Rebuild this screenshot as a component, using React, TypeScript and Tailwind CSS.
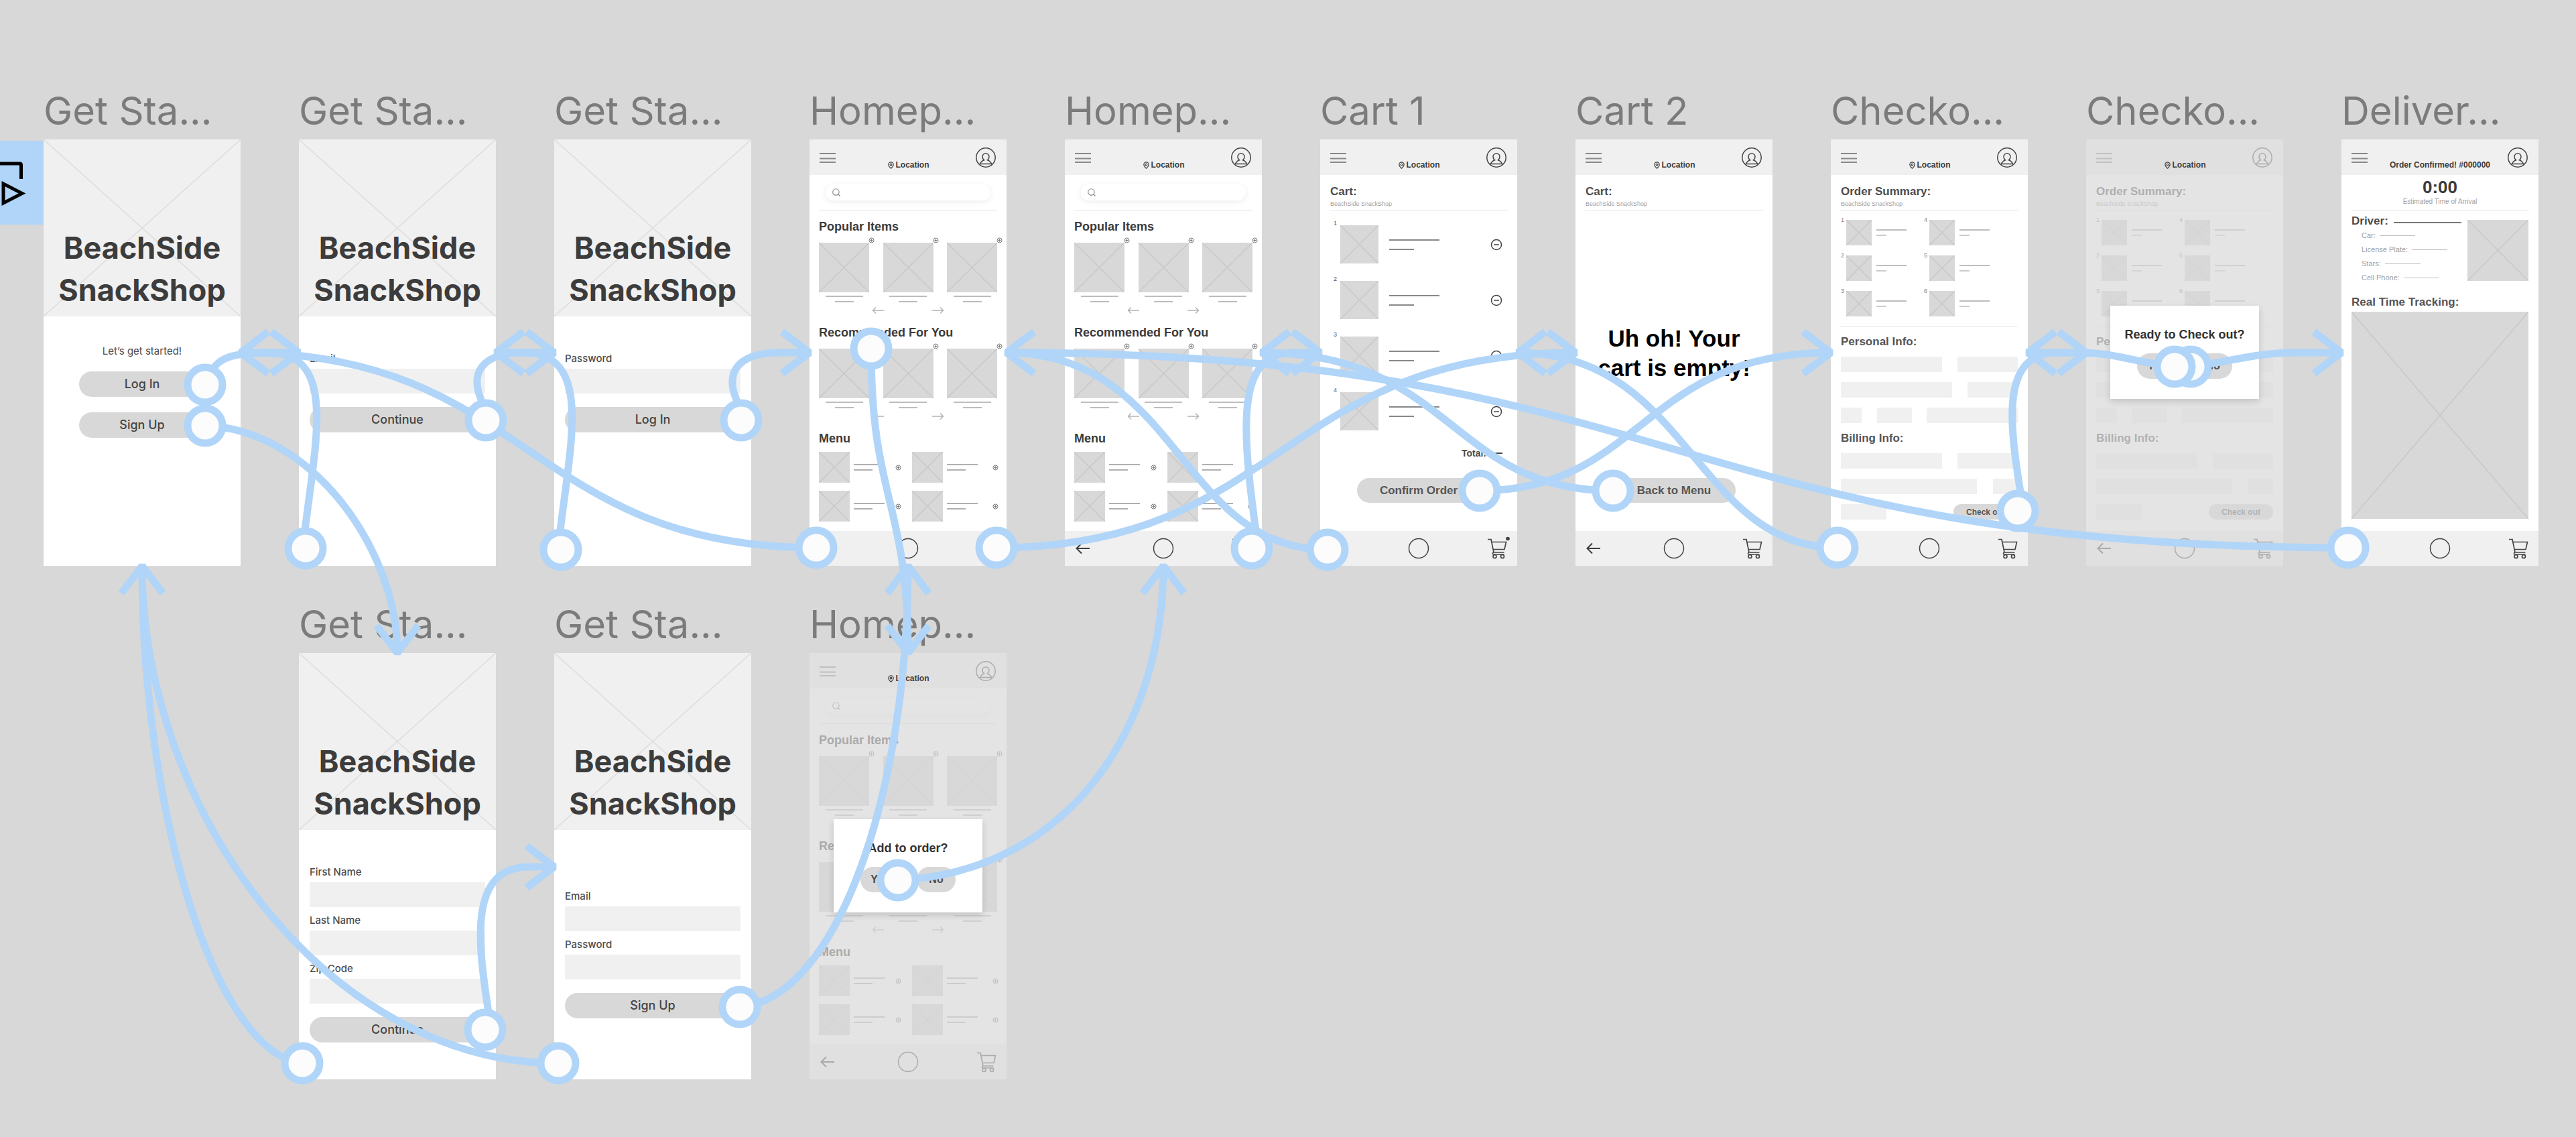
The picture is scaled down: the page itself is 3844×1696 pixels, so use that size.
import React from "react";
import { MapPin, Search } from "lucide-react";

const SANS = "font-['Liberation_Sans',Arial,sans-serif]";
const INTER = "font-['Inter',sans-serif]";

/* ---------- small drawings ---------- */

function Cross({ className }: { className: string }) {
  return (
    <svg className={`absolute inset-0 h-full w-full ${className}`} viewBox="0 0 100 100" preserveAspectRatio="none" fill="none" stroke="currentColor" strokeWidth="1.5" aria-hidden="true">
      <path d="M0 0L100 100M100 0L0 100" vectorEffect="non-scaling-stroke" />
    </svg>
  );
}

function Picture({ className }: { className: string }) {
  return (
    <div className={`relative shrink-0 bg-[#d8d8d8] ${className}`}>
      <Cross className="text-[#c8c8c8]" />
    </div>
  );
}

function PlusBadge({ className = "" }: { className?: string }) {
  return (
    <svg className={`h-[9px] w-[9px] shrink-0 text-[#777777] ${className}`} viewBox="0 0 9 9" fill="none" stroke="currentColor" aria-hidden="true">
      <circle cx="4.5" cy="4.5" r="3.5" />
      <path d="M4.5 2.5V6.5M2.5 4.5H6.5" />
    </svg>
  );
}

function MinusIcon() {
  return (
    <svg className="h-[18px] w-[18px]" viewBox="0 0 18 18" fill="none" stroke="#444444" strokeWidth="1.5" aria-hidden="true">
      <circle cx="9" cy="9" r="7.5" />
      <path d="M5 9H13" />
    </svg>
  );
}

function Bar({ className }: { className: string }) {
  return <div className={`h-[2px] ${className}`} />;
}

function Divider({ className }: { className: string }) {
  return <div className={`mx-[14px] h-px bg-[#e6e6e6] ${className}`} />;
}

/* ---------- shared phone parts ---------- */

function TopBar({ title }: { title?: string }) {
  return (
    <header className="flex h-[53px] items-center justify-between bg-[#f0f0f0] px-[15px]">
      <button aria-label="Menu" className="flex w-8 flex-col">
        <svg className="h-4 w-6" viewBox="0 0 24 16" stroke="#888888" strokeWidth="2" aria-hidden="true">
          <path d="M0 2H24M0 9.500H24M0 15H24" />
        </svg>
      </button>
      <p className="relative z-10 mb-[7px] flex items-center gap-[2px] self-end text-xs leading-4 font-bold text-[#3c3c3c]">
        {title ?? (
          <>
            <MapPin className="h-[11px] w-[11px]" strokeWidth={2.5} aria-hidden="true" />
            Location
          </>
        )}
      </p>
      <button aria-label="Account" className="flex w-8 justify-end">
        <svg className="h-8 w-8" viewBox="0 0 32 32" fill="none" stroke="#444444" strokeWidth="1.5" aria-hidden="true">
          <circle cx="16" cy="16" r="14.200" />
          <path d="M7 26.500C8.500 22.500 11.500 20.500 13.500 19.800C11.700 18.500 11 16.800 11 15C11 12 13.200 10 16 10C18.800 10 21 12 21 15C21 16.800 20.300 18.500 18.500 19.800C20.500 20.500 23.500 22.500 25 26.500" />
          <path d="M8 25.500H24" />
        </svg>
      </button>
    </header>
  );
}

function BottomBar({ badge = false }: { badge?: boolean }) {
  return (
    <footer className="mt-auto flex h-[52px] items-center justify-between bg-[#f0f0f0] px-[15px]">
      <button aria-label="Back" className="flex w-9">
        <svg className="h-5 w-6" viewBox="0 0 24 20" fill="none" stroke="#3c3c3c" strokeWidth="2" aria-hidden="true">
          <path d="M22 10H2.500M10 2.500L2.500 10L10 17.500" />
        </svg>
      </button>
      <button aria-label="Home">
        <svg className="h-8 w-8" viewBox="0 0 32 32" fill="none" stroke="#444444" strokeWidth="1.5" aria-hidden="true">
          <circle cx="16" cy="16" r="14.500" />
        </svg>
      </button>
      <button aria-label="Cart" className="flex w-9 justify-end">
        <svg className="h-8 w-8 overflow-visible" viewBox="0 0 32 32" fill="none" stroke="#444444" strokeWidth="1.7" aria-hidden="true">
          <path d="M3 2.500H8L12 22H27.500M9 6.500H30.500L28 17.500H11" />
          <path d="M12 22C10 22 10 25 12 25H27.500" />
          <circle cx="13.500" cy="28" r="2.500" />
          <circle cx="25" cy="28" r="2.500" />
          {badge && <circle cx="33" cy="1.500" r="2" fill="#444444" />}
        </svg>
      </button>
    </footer>
  );
}

function Artboard({ name, faded = false, font = SANS, modal, children }: { name: string; faded?: boolean; font?: string; modal?: React.ReactNode; children: React.ReactNode }) {
  return (
    <section className="w-[294px] shrink-0">
      <h2 className={`mb-3 text-[58px] leading-[62px] whitespace-nowrap text-[#7b7b7b] ${INTER}`}>{name}</h2>
      <div className={`relative flex min-h-[636px] flex-col bg-white ${font}`}>
        {children}
        {faded && <div className="absolute inset-0 bg-[#d8d8d8]/70" />}
        {modal}
      </div>
    </section>
  );
}

function Modal({ question }: { question: string }) {
  return (
    <div role="dialog" aria-label={question} className="absolute inset-x-9 top-[248px] z-10 flex h-[139px] flex-col items-center bg-white pt-[31px] shadow-[0_4px_10px_rgba(0,0,0,0.15)]">
      <p className="text-lg leading-6 font-bold whitespace-nowrap text-[#333333]">{question}</p>
      <div className="mt-4 flex gap-[26px]">
        <button className="h-[38px] w-[58px] rounded-full bg-[#d8d8d8] text-base font-bold text-[#4c4c4c]">Yes</button>
        <button className="h-[38px] w-[58px] rounded-full bg-[#d8d8d8] text-base font-bold text-[#4c4c4c]">No</button>
      </div>
    </div>
  );
}

/* ---------- Get Started screens ---------- */

function Hero() {
  return (
    <div className="relative h-[264px] bg-[#f0f0f0] pt-[130px]">
      <Cross className="text-[#dddddd]" />
      <h1 className="relative text-center text-[45px] leading-[63px] font-bold text-[#3c3c3c]">
        BeachSide
        <br />
        SnackShop
      </h1>
    </div>
  );
}

function Field({ id, label }: { id: string; label: string }) {
  return (
    <div className="flex flex-col">
      <label htmlFor={id} className="text-[15px] leading-5 font-medium text-[#4c4c4c]">{label}</label>
      <input id={id} className="mt-[5px] h-[37px] w-full bg-[#f0f0f0] px-2" />
    </div>
  );
}

function GetStartedForm({ id, name, fields, action, top }: { id: string; name: string; fields: string[]; action: string; top: string }) {
  return (
    <Artboard name={name} font={INTER}>
      <Hero />
      <form className={`flex flex-col gap-[10px] px-4 ${top}`}>
        {fields.map((f) => (
          <Field key={f} id={`${id}-${f.replace(" ", "")}`} label={f} />
        ))}
        <button type="button" className="mt-[10px] h-[38px] rounded-full bg-[#d8d8d8] text-lg font-medium text-[#444444]">{action}</button>
      </form>
    </Artboard>
  );
}

function Welcome() {
  return (
    <Artboard name="Get Sta..." font={INTER}>
      <Hero />
      <p className="mt-10 text-center text-[15px] leading-6 text-[#4c4c4c]">Let’s get started!</p>
      <div className="mx-[53px] mt-[18px] flex flex-col gap-[23px]">
        <button className="h-[38px] rounded-full bg-[#d8d8d8] text-lg font-medium text-[#444444]">Log In</button>
        <button className="h-[38px] rounded-full bg-[#d8d8d8] text-lg font-medium text-[#444444]">Sign Up</button>
      </div>
    </Artboard>
  );
}

/* ---------- Homepage ---------- */

function Shelf({ title, top }: { title: string; top: string }) {
  return (
    <div className={`px-[14px] ${top}`}>
      <h3 className="text-lg leading-6 font-bold text-[#3c3c3c]">{title}</h3>
      <div className="mt-3 flex justify-between">
        {[0, 1, 2].map((i) => (
          <div key={i} className="relative flex w-[75px] flex-col items-center">
            <Picture className="h-[74px] w-full" />
            <PlusBadge className="absolute -top-2 -right-2" />
            <Bar className="mt-[5px] w-14 bg-[#bdbdbd]" />
            <Bar className="mt-[6px] w-7 bg-[#bdbdbd]" />
          </div>
        ))}
      </div>
      <div className="mt-[3px] flex justify-center gap-[72px]">
        <button aria-label="Previous">
          <svg className="h-[18px] w-[18px]" viewBox="0 0 18 18" fill="none" stroke="#b4b4b4" strokeWidth="1.5" aria-hidden="true">
            <path d="M18 9H1.500M6 4.500L1.500 9L6 13.500" />
          </svg>
        </button>
        <button aria-label="Next">
          <svg className="h-[18px] w-[18px]" viewBox="0 0 18 18" fill="none" stroke="#b4b4b4" strokeWidth="1.5" aria-hidden="true">
            <path d="M0 9H16.500M12 4.500L16.500 9L12 13.500" />
          </svg>
        </button>
      </div>
    </div>
  );
}

function Homepage({ id, faded, modal }: { id: string; faded?: boolean; modal?: React.ReactNode }) {
  return (
    <Artboard name="Homep..." faded={faded} modal={modal}>
      <TopBar />
      <label htmlFor={id} className="mx-6 mt-[14px] flex h-6 items-center rounded-full bg-white px-[9px] shadow-[0_2px_10px_rgba(0,0,0,0.08)]">
        <Search className="h-[14px] w-[14px] text-[#888888]" strokeWidth={2} />
        <input id={id} type="search" aria-label="Search" className="w-full min-w-0 flex-1 text-xs" />
      </label>
      <Divider className="mt-[14px]" />
      <Shelf title="Popular Items" top="mt-3" />
      <Shelf title="Recommended For You" top="mt-3" />
      <div className="mt-3 px-[14px]">
        <h3 className="text-lg leading-6 font-bold text-[#3c3c3c]">Menu</h3>
        <div className="mt-2 grid grid-cols-[139px_127px] gap-y-3">
          {[0, 1, 2, 3].map((i) => (
            <div key={i} className="flex items-center">
              <Picture className="h-[46px] w-[46px]" />
              <div className="ml-[6px] flex flex-col gap-[6px]">
                <Bar className="w-[46px] bg-[#b0b0b0]" />
                <Bar className="w-7 bg-[#b0b0b0]" />
              </div>
              <PlusBadge className={i % 2 ? "ml-[22px]" : "ml-4"} />
            </div>
          ))}
        </div>
      </div>
      <BottomBar />
    </Artboard>
  );
}

/* ---------- Cart ---------- */

function ScreenTitle({ title }: { title: string }) {
  return (
    <>
      <h3 className="mx-[15px] mt-[15px] text-[17px] leading-5 font-bold text-[#4c4c4c]">{title}</h3>
      <p className="mx-[15px] mt-[2px] text-[9px] leading-3 text-[#a0a0a0]">BeachSide SnackShop</p>
      <Divider className="mt-[3px]" />
    </>
  );
}

function CartFull() {
  return (
    <Artboard name="Cart 1">
      <TopBar />
      <ScreenTitle title="Cart:" />
      <ol className="mt-[22px] flex flex-col gap-[26px] pr-[22px] pl-5">
        {[1, 2, 3, 4].map((n) => (
          <li key={n} className="flex items-center">
            <span className="-mt-2 w-[10px] self-start text-[9px] leading-[10px] text-[#555555]">{n}</span>
            <Picture className="h-[57px] w-[57px]" />
            <div className="ml-4 flex flex-1 flex-col gap-3">
              <Bar className="w-[75px] bg-[#888888]" />
              <Bar className="w-[37px] bg-[#888888]" />
            </div>
            <button aria-label="Remove item">
              <MinusIcon />
            </button>
          </li>
        ))}
      </ol>
      <p className="mt-6 mr-[22px] flex items-center justify-end gap-1 text-sm leading-5 font-bold text-[#4c4c4c]">
        Total:
        <span className="h-[2px] w-5 bg-[#444444]" />
      </p>
      <button className="mx-[55px] mt-[27px] h-[37px] rounded-full bg-[#d8d8d8] text-[17px] font-bold text-[#555555]">Confirm Order</button>
      <BottomBar badge />
    </Artboard>
  );
}

function CartEmpty() {
  return (
    <Artboard name="Cart 2">
      <TopBar />
      <ScreenTitle title="Cart:" />
      <p className="mt-[169px] text-center text-[35px] leading-[44px] font-bold text-black">
        Uh oh! Your
        <br />
        cart is empty!
      </p>
      <button className="mx-[55px] mt-[142px] h-[37px] rounded-full bg-[#d8d8d8] text-[17px] font-bold text-[#555555]">Back to Menu</button>
      <BottomBar />
    </Artboard>
  );
}

/* ---------- Checkout ---------- */

function Slot({ label, className }: { label: string; className: string }) {
  return <input aria-label={label} className={`h-[23px] min-w-0 bg-[#f0f0f0] px-1 text-xs ${className}`} />;
}

function Checkout({ faded, modal }: { faded?: boolean; modal?: React.ReactNode }) {
  return (
    <Artboard name="Checko..." faded={faded} modal={modal}>
      <TopBar />
      <ScreenTitle title="Order Summary:" />
      <ol className="mt-[14px] grid grid-flow-col grid-cols-[124px_124px] grid-rows-3 gap-y-[15px] pl-[15px]">
        {[1, 2, 3, 4, 5, 6].map((n) => (
          <li key={n} className="flex items-center">
            <span className="-mt-1 w-2 self-start text-[9px] leading-[8px] text-[#888888]">{n}</span>
            <Picture className="h-[38px] w-[38px]" />
            <div className="ml-[7px] flex flex-col gap-[6px]">
              <Bar className="w-[45px] bg-[#bdbdbd]" />
              <Bar className="w-[15px] bg-[#cccccc]" />
            </div>
          </li>
        ))}
      </ol>
      <Divider className="mt-[14px]" />
      <h3 className="mx-[15px] mt-[13px] text-[17px] leading-5 font-bold text-[#555555]">Personal Info:</h3>
      <div className="mx-[15px] mt-3 flex flex-col gap-[15px]">
        <div className="flex justify-between">
          <Slot label="First name" className="w-[151px]" />
          <Slot label="Last name" className="w-[90px]" />
        </div>
        <div className="flex justify-between">
          <Slot label="Address" className="w-[166px]" />
          <Slot label="Unit" className="w-[75px]" />
        </div>
        <div className="flex justify-between">
          <Slot label="State" className="w-[31px]" />
          <Slot label="Zip code" className="w-[52px]" />
          <Slot label="Phone" className="w-[136px]" />
        </div>
      </div>
      <h3 className="mx-[15px] mt-[13px] text-[17px] leading-5 font-bold text-[#555555]">Billing Info:</h3>
      <div className="mx-[15px] mt-3 flex flex-col gap-[15px]">
        <div className="flex justify-between">
          <Slot label="Name on card" className="w-[151px]" />
          <Slot label="Card type" className="w-[90px]" />
        </div>
        <div className="flex justify-between">
          <Slot label="Card number" className="w-[203px]" />
          <Slot label="Security code" className="w-[37px]" />
        </div>
        <div className="flex justify-between">
          <Slot label="Expiry" className="w-[68px]" />
          <button className="h-[23px] w-24 rounded-full bg-[#d8d8d8] text-xs font-bold text-[#555555]">Check out</button>
        </div>
      </div>
      <BottomBar />
    </Artboard>
  );
}

/* ---------- Delivery ---------- */

function Delivery() {
  return (
    <Artboard name="Deliver...">
      <TopBar title="Order Confirmed! #000000" />
      <p className="mt-1 text-center text-[26px] leading-7 font-bold text-[#3c3c3c]">0:00</p>
      <p className="mt-[2px] text-center text-[10px] leading-3 text-[#a0a0a0]">Estimated Time of Arrival</p>
      <Divider className="mt-[6px]" />
      <div className="mx-[15px] mt-[6px] flex justify-between">
        <div>
          <h3 className="flex items-center gap-2 text-[17px] leading-5 font-bold text-[#4c4c4c]">
            Driver:
            <span className="mt-1 h-[2px] w-[101px] bg-[#777777]" />
          </h3>
          <dl className="mt-px ml-[15px] text-[11px] leading-[21px] text-[#a0a0a0]">
            {["Car:", "License Plate:", "Stars:", "Cell Phone:"].map((t) => (
              <div key={t} className="flex items-center gap-[6px]">
                <dt>{t}</dt>
                <dd className="h-px w-[53px] bg-[#c0c0c0]" />
              </div>
            ))}
          </dl>
        </div>
        <Picture className="mt-2 h-[91px] w-[91px]" />
      </div>
      <h3 className="mx-[15px] mt-4 text-[17px] leading-5 font-bold text-[#555555]">Real Time Tracking:</h3>
      <Picture className="mx-[15px] mt-1 h-[309px]" />
      <BottomBar />
    </Artboard>
  );
}

/* ---------- prototype connections ---------- */

const WIRES = [
  "M306 574C318 535 340 526 400 526H446",
  "M306 635C465 640 593 820 593 974",
  "M454 800C470 660 505 526 400 526H359",
  "M1218 817C788 817 788 526 359 526",
  "M722 605C699 560 714 526 784 526H827",
  "M1103 605C1080 560 1095 526 1165 526H1208",
  "M835 800C851 660 886 526 781 526H740",
  "M1487 817C1912 817 1912 526 2351 526",
  "M2742 817C2530 817 2520 526 2265 526",
  "M2208 732C2450 732 2450 526 2732 526",
  "M2407 732C2165 732 2165 526 1883 526",
  "M1875 800C1855 650 1840 526 1930 526H1970",
  "M1981 820C1760 820 1760 526 1502 526",
  "M3504 817C2503 817 2503 526 1502 526",
  "M3016 740C2998 630 2985 526 3070 526H3113",
  "M3245 547C3180 540 3160 526 3100 526H3026",
  "M3268 547C3330 540 3360 526 3430 526H3494",
  "M1300 520C1300 747 1355 747 1355 974",
  "M1104 1502C1250 1490 1355 1180 1355 844",
  "M1340 1313C1600 1300 1736 1080 1736 844",
  "M451 1586C320 1570 212 1210 212 844",
  "M833 1586C490 1586 212 1210 212 844",
  "M729 1510C712 1400 700 1293 790 1293H827",
];

const HEADS: [number, number, number][] = [
  ...[446, 827, 1208, 1970, 2351, 2732, 3113, 3494].map((x): [number, number, number] => [x, 526, 0]),
  ...[359, 740, 1502, 1883, 2265, 3026].map((x): [number, number, number] => [x, 526, 180]),
  [827, 1293, 0],
  [212, 844, -90],
  [1355, 844, -90],
  [1736, 844, -90],
  [593, 974, 90],
  [1355, 974, 90],
];

const NODES: [number, number][] = [
  [306, 574], [306, 635], [725, 627], [456, 818], [1106, 627], [837, 820], [1218, 817], [1487, 817],
  [1300, 520], [1868, 818], [1981, 820], [2208, 732], [2407, 732], [2742, 817], [3011, 762], [3269, 547],
  [3245, 547], [3504, 817], [451, 1586], [724, 1536], [833, 1586], [1104, 1502], [1340, 1313],
];

function Connections() {
  return (
    <svg className="pointer-events-none absolute top-0 left-0 z-20 h-[1696px] w-[3844px]" viewBox="0 0 3844 1696" fill="none" stroke="#b0d5f8" strokeWidth="11" aria-hidden="true">
      {WIRES.map((d) => (
        <path key={d} d={d} />
      ))}
      {HEADS.map(([x, y, r]) => (
        <path key={`${x}-${y}-${r}`} d="M-41 -31L0 0L-41 31" strokeLinejoin="bevel" transform={`translate(${x} ${y}) rotate(${r})`} />
      ))}
      {NODES.map(([x, y]) => (
        <circle key={`${x}-${y}`} cx={x} cy={y} r="26" fill="#fcfcfc" />
      ))}
    </svg>
  );
}

function FlowTab() {
  return (
    <button aria-label="Play flow" className="absolute top-[210px] left-0 h-[125px] w-[65px] bg-[#b0d5f8]">
      <svg className="h-full w-full" viewBox="0 0 65 125" fill="none" stroke="#000000" strokeWidth="5" aria-hidden="true">
        <path d="M0 34H30Q31.500 34 31.500 36V57" />
        <path d="M5 64V93L33 78.500Z" />
      </svg>
    </button>
  );
}

export default function App() {
  return (
    <main className="relative min-h-screen w-full overflow-hidden bg-[#d8d8d8] pt-[134px] pb-[85px]">
      <FlowTab />
      <div className="flex w-max gap-[87px] pl-[65px]">
        <Welcome />
        <GetStartedForm id="login-email" name="Get Sta..." fields={["Email"]} action="Continue" top="pt-[53px]" />
        <GetStartedForm id="login-password" name="Get Sta..." fields={["Password"]} action="Log In" top="pt-[53px]" />
        <Homepage id="search-a" />
        <Homepage id="search-b" />
        <CartFull />
        <CartEmpty />
        <Checkout />
        <Checkout faded modal={<Modal question="Ready to Check out?" />} />
        <Delivery />
      </div>
      <div className="mt-[56px] flex w-max gap-[87px] pl-[446px]">
        <GetStartedForm id="signup-name" name="Get Sta..." fields={["First Name", "Last Name", "Zip Code"]} action="Continue" top="pt-[53px]" />
        <GetStartedForm id="signup-account" name="Get Sta..." fields={["Email", "Password"]} action="Sign Up" top="pt-[89px]" />
        <Homepage id="search-c" faded modal={<Modal question="Add to order?" />} />
      </div>
      <Connections />
    </main>
  );
}
